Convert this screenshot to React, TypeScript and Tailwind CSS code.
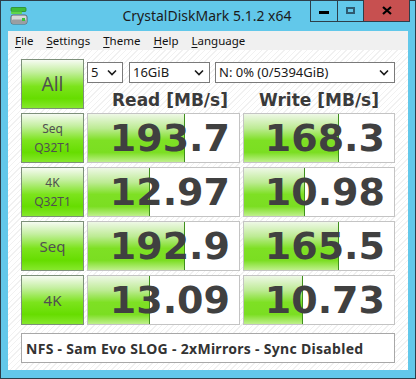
import React from "react";

type Row = {
  label: string[];
  read: string;
  readBar: number;
  write: string;
  writeBar: number;
};

const rows: Row[] = [
  { label: ["Seq", "Q32T1"], read: "193.7", readBar: 97, write: "168.3", writeBar: 95 },
  { label: ["4K", "Q32T1"], read: "12.97", readBar: 62, write: "10.98", writeBar: 61 },
  { label: ["Seq"], read: "192.9", readBar: 97, write: "165.5", writeBar: 95 },
  { label: ["4K"], read: "13.09", readBar: 62, write: "10.73", writeBar: 59 },
];

const ui = "font-['Noto_Sans','Open_Sans',sans-serif]";
const bold = "font-['DejaVu_Sans',Verdana,sans-serif] font-bold";

const GreenButton = ({ children, className = "" }: { children: React.ReactNode; className?: string }) => (
  <div
    className={`flex flex-col items-center justify-center border border-[#7d907a] bg-[linear-gradient(to_bottom,#f6fbf2_0%,#c4efa0_25%,#7ce41c_55%,#66dd00_80%,#86e82c_100%)] text-[#505050] ${ui} ${className}`}
  >
    {children}
  </div>
);

const ValueBox = ({ value, bar }: { value: string; bar: number }) => (
  <div className="relative h-[50px] border border-[#c4c4c4] bg-white">
    <div
      className="absolute left-0 top-0 h-full border-r border-[#3f8f1c] bg-[linear-gradient(to_bottom,#eef8e6_0%,#bdeb94_30%,#7ee024_55%,#7bde22_80%,#bff08c_100%)]"
      style={{ width: bar }}
    />
    <div
      className={`relative flex h-full items-center justify-end pr-[9px] text-[38px] leading-none text-[#404040] ${bold}`}
    >
      {value}
    </div>
  </div>
);

const Select = ({ text, className = "" }: { text: string; className?: string }) => (
  <div
    className={`flex h-[21px] items-center justify-between border border-[#7a7a7a] bg-white pl-[3px] pr-[5px] text-[13px] text-[#1a1a1a] ${ui} ${className}`}
  >
    <span>{text}</span>
    <svg width="10" height="7" viewBox="0 0 10 7">
      <path d="M1 1.5 L5 5.5 L9 1.5" fill="none" stroke="#1a1a1a" strokeWidth="1.6" />
    </svg>
  </div>
);

const MenuItem = ({ first, rest }: { first: string; rest: string }) => (
  <span>
    <span className="underline underline-offset-2">{first}</span>
    {rest}
  </span>
);

export default function App() {
  return (
    <div className="relative h-[379px] w-[416px] border border-[#2d3e4a] bg-[#62c8ea]">
      {/* title bar */}
      <div className="relative flex h-[30px] items-center justify-center">
        <svg className="absolute left-[9px] top-[6px]" width="18" height="18" viewBox="0 0 18 18">
          <rect x="1" y="0.5" width="15" height="4" rx="1" fill="#3fbf3a" stroke="#2a8a26" strokeWidth="0.8" />
          <rect x="1" y="4.5" width="11" height="2.5" rx="0.8" fill="#5fd64a" />
          <rect x="1" y="8" width="16" height="9" rx="2" fill="#d6d8da" stroke="#5a5f63" strokeWidth="0.9" />
          <rect x="1.5" y="12.5" width="15" height="4" rx="1.5" fill="#9a9ea2" />
          <rect x="12" y="11" width="3" height="3" fill="#39c23a" />
        </svg>
        <span className={`text-[14px] text-[#1b1b1b] ${ui} -translate-y-[1px] -ml-[2px]`}>CrystalDiskMark 5.1.2 x64</span>
        <div className="absolute right-[5px] top-[-1px] flex h-[22px] border border-t-0 border-[#2d3e4a]">
          <div className="flex w-[27px] items-center justify-center border-r border-[#2d3e4a]">
            <div className="mt-[4px] h-[3px] w-[10px] bg-black" />
          </div>
          <div className="flex w-[26px] items-center justify-center border-r border-[#2d3e4a]">
            <div className="mb-[1px] h-[7px] w-[9px] border-2 border-[#2e5a70]" />
          </div>
          <div className="flex w-[45px] items-center justify-center bg-[#c75050]">
            <svg width="10" height="9" viewBox="0 0 10 9">
              <path d="M1 1 L9 8 M9 1 L1 8" stroke="#000" strokeWidth="2.2" />
            </svg>
          </div>
        </div>
      </div>

      {/* client area */}
      <div className="mx-[7px] flex h-[339px] flex-col">
        <div className={`flex h-[19px] items-center gap-[13px] bg-[#f0f0f0] pl-[7px] text-[11.5px] text-[#111] ${ui}`}>
          <MenuItem first="F" rest="ile" />
          <MenuItem first="S" rest="ettings" />
          <MenuItem first="T" rest="heme" />
          <MenuItem first="H" rest="elp" />
          <MenuItem first="L" rest="anguage" />
        </div>
        <div className="flex flex-1 flex-col bg-[repeating-linear-gradient(135deg,#ffffff_0px,#ffffff_3px,#f1f1f1_3px,#f1f1f1_4px)] px-[13px] pt-[9px]">
          <div className="grid grid-cols-[63px_153px_152px] gap-x-[3px] gap-y-[4px]">
            <GreenButton className="h-[50px] text-[19px]">All</GreenButton>
            <div className="col-span-2 flex flex-col">
              <div className="mt-[3px] flex">
                <Select text="5" className="w-[36px]" />
                <Select text="16GiB" className="ml-[6px] w-[81px]" />
                <Select text="N: 0% (0/5394GiB)" className="ml-[5px] flex-1" />
              </div>
              <div className={`mt-[9px] grid grid-cols-2 text-[17px] leading-none text-[#3a3a3a] ${bold}`}>
                <div className="pl-[12px] text-center">Read [MB/s]</div>
                <div className="pl-[2px] text-center">Write [MB/s]</div>
              </div>
            </div>
            {rows.map((r) => (
              <React.Fragment key={r.label.join() + r.read}>
                <GreenButton className={`h-[50px] ${r.label.length > 1 ? "text-[12px] leading-[19px]" : "text-[15px]"}`}>
                  {r.label.map((l) => (
                    <span key={l}>{l}</span>
                  ))}
                </GreenButton>
                <ValueBox value={r.read} bar={r.readBar} />
                <ValueBox value={r.write} bar={r.writeBar} />
              </React.Fragment>
            ))}
          </div>
          <div
            className={`mt-[8px] flex h-[30px] items-center border border-[#a8a8a8] bg-white pl-[4px] text-[14px] tracking-[0.3px] text-[#333] ${ui} font-bold`}
          >
            NFS - Sam Evo SLOG - 2xMirrors - Sync Disabled
          </div>
        </div>
      </div>
    </div>
  );
}
